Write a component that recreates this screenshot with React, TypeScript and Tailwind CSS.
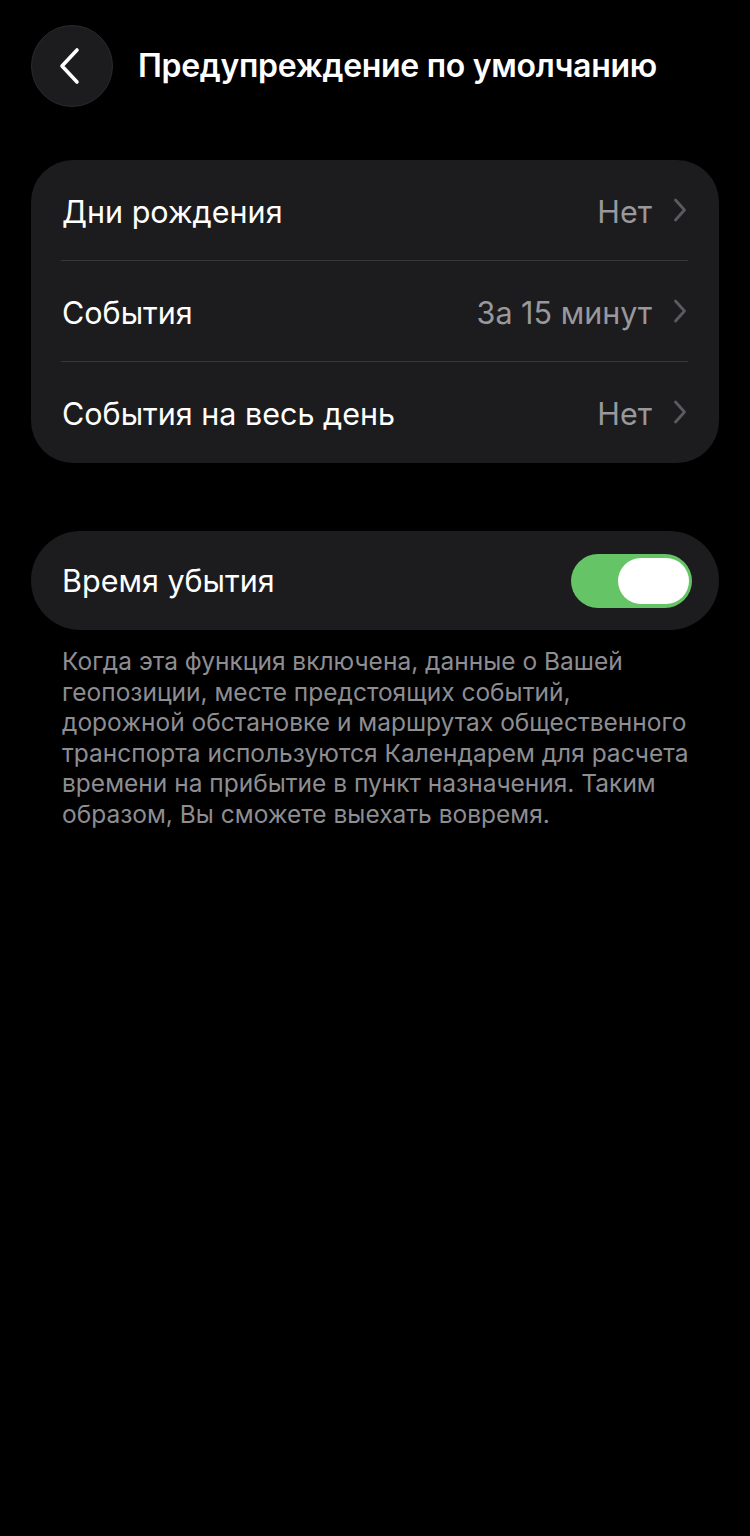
interface Row {
  label: string;
  value: string;
}

const rows: Row[] = [
  { label: 'Дни рождения', value: 'Нет' },
  { label: 'События', value: 'За 15 минут' },
  { label: 'События на весь день', value: 'Нет' },
];

const footerLines = [
  'Когда эта функция включена, данные о Вашей',
  'геопозиции, месте предстоящих событий,',
  'дорожной обстановке и маршрутах общественного',
  'транспорта используются Календарем для расчета',
  'времени на прибытие в пункт назначения. Таким',
  'образом, Вы сможете выехать вовремя.',
];

const font = { fontFamily: 'Inter, "Noto Sans", sans-serif' };

const Chevron = () => (
  <svg width="14" height="24" viewBox="0 0 14 24" fill="none">
    <path d="M2.5 2 L11.5 12 L2.5 22" stroke="#5b5b5f" strokeWidth="2.8" strokeLinecap="round" strokeLinejoin="round" />
  </svg>
);

export default function App() {
  return (
    <div className="min-h-[1536px] w-[750px] bg-black text-white" style={font}>
      {/* Header */}
      <div className="flex items-center pt-[25px] pl-[31px]">
        <button className="flex h-[82px] w-[82px] items-center justify-center rounded-full border border-[#2a2a2c] bg-[#1c1c1e]">
          <svg width="26" height="38" viewBox="0 0 26 38" fill="none" className="-ml-[4px]">
            <path d="M20 3 L5 19 L20 35" stroke="white" strokeWidth="3.6" strokeLinecap="round" strokeLinejoin="round" />
          </svg>
        </button>
        <h1 className="ml-[25px] text-[32px] font-semibold tracking-[-0.3px]">Предупреждение по умолчанию</h1>
      </div>

      {/* Default alerts */}
      <div className="mx-[31px] mt-[53px] rounded-[42px] bg-[#1c1c1e] pb-px">
        {rows.map((row, i) => (
          <div key={row.label}>
            {i > 0 && <div className="ml-[30px] mr-[31px] h-px bg-[#38383a]" />}
            <div className="flex h-[100px] items-center justify-between pl-[31px] pr-[32px]">
              <span className="pt-[3px] text-[30.5px]">{row.label}</span>
              <div className="flex items-center gap-[21px]">
                <span className="pt-[3px] text-[30.5px] text-[#98989d]">{row.value}</span>
                <Chevron />
              </div>
            </div>
          </div>
        ))}
      </div>

      {/* Travel time */}
      <div className="mx-[31px] mt-[68px] flex h-[99px] items-center justify-between rounded-full bg-[#1c1c1e] pl-[31px] pr-[27px]">
        <span className="text-[30.5px]">Время убытия</span>
        <div className="flex h-[54px] w-[121px] items-center justify-end rounded-full bg-[#65c466] pr-[3px]">
          <div className="h-[46px] w-[71px] rounded-full bg-white" />
        </div>
      </div>

      <p className="ml-[62px] mt-[16px] text-[24.5px] leading-[30.5px] text-[#8d8d92]">
        {footerLines.map((line) => (
          <span key={line} className="block whitespace-nowrap">{line}</span>
        ))}
      </p>
    </div>
  );
}
